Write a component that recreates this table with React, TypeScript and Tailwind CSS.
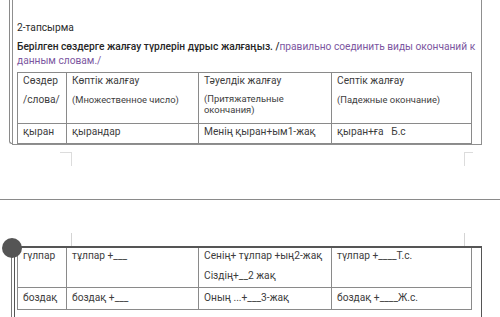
import React from "react";

const font = { fontFamily: "Roboto, 'Liberation Sans', Arial, sans-serif" };

function Cell({ children, className = "" }: { children?: React.ReactNode; className?: string }) {
  return (
    <div className={"border-r border-b border-[#8a8a8a] pl-[5px] text-[10.2px] leading-[13px] text-[#3d3d3d] " + className}>
      {children}
    </div>
  );
}

export default function App() {
  return (
    <div className="w-[500px] h-[317px] overflow-hidden bg-white" style={font}>
      {/* Top section */}
      <div className="flex">
        <div className="ml-[9px] w-[3px] h-[144px] border-l border-b border-[#8a8a8a] rounded-bl-[3px]" />
        <div className="w-[470px] h-[145px] border-l border-r border-b border-[#8f8f8f] pl-[4px] pt-[21px]">
          <div className="text-[10.2px] leading-[13px] text-[#2a2a2a]">2-тапсырма</div>
          <div className="mt-[6px] text-[10.2px] leading-[14px] whitespace-nowrap">
            <div>
              <span className="font-medium text-[#262626]">Берілген сөздерге жалғау түрлерін дұрыс жалғаңыз. /</span>
              <span className="text-[#7b56a0]">правильно соединить виды окончаний к</span>
            </div>
            <div className="text-[#7b56a0]">данным словам./</div>
          </div>
          <div className="mt-[4px] w-[455px] border-l border-t border-[#8a8a8a] grid grid-cols-[49px_132px_133px_140px] grid-rows-[51px_20px]">
            <Cell className="pt-[1px]">
              <div>Сөздер</div>
              <div className="mt-[6px]">/слова/</div>
            </Cell>
            <Cell className="pt-[1px]">
              <div>Көптік жалғау</div>
              <div className="mt-[6px] text-[9.4px]">(Множественное число)</div>
            </Cell>
            <Cell className="pt-[1px]">
              <div>Тәуелдік жалғау</div>
              <div className="mt-[6px] text-[9.4px] leading-[11px]">(Притяжательные<br />окончания)</div>
            </Cell>
            <Cell className="pt-[1px]">
              <div>Септік жалғау</div>
              <div className="mt-[6px] text-[9.4px]">(Падежные окончание)</div>
            </Cell>
            <Cell className="pt-[1px]">қыран</Cell>
            <Cell className="pt-[1px]">қырандар</Cell>
            <Cell className="pt-[1px]">Менің қыран+ым1-жақ</Cell>
            <Cell className="pt-[1px] whitespace-pre">қыран+ға   Б.с</Cell>
          </div>
        </div>
      </div>

      {/* Middle gap with page marks */}
      <div className="h-[101px] flex flex-col">
        <div className="h-[7px]" />
        <div className="h-[14px] flex">
          <div className="ml-[60px] w-[12px] border-t border-r border-[#dcdcdc]" />
          <div className="ml-[392px] w-[9px] border-t border-l border-[#dcdcdc]" />
        </div>
        <div className="h-[33px]" />
        <div className="h-px bg-[#8a8a8a]" />
        <div className="h-[33px]" />
        <div className="h-[13px] flex">
          <div className="ml-[71px] w-px bg-[#d4d4d4]" />
          <div className="ml-[392px] w-px bg-[#d4d4d4]" />
        </div>
      </div>

      {/* Bottom section */}
      <div className="relative ml-[11px] w-[471px] h-[71px] border-t-2 border-l border-r border-[#555] border-l-[#777] pl-[2px]">
        <div className="absolute left-[-10px] top-[-10px] w-[20px] h-[20px] rounded-full bg-[#555]" />
        <div className="h-full border-l border-[#555] pl-[2px]">
          <div className="w-[455px] border-l border-[#8a8a8a] grid grid-cols-[49px_132px_133px_140px] grid-rows-[40px_22px]">
            <Cell className="pt-[1px]">гүлпар</Cell>
            <Cell className="pt-[1px]">тұлпар +___</Cell>
            <Cell className="pt-[1px]">
              <div>Сенің+ тұлпар +ың2-жақ</div>
              <div className="mt-[7px]">Сіздің+__2 жақ</div>
            </Cell>
            <Cell className="pt-[1px]">түлпар +____Т.с.</Cell>
            <Cell className="pt-[3px]">боздақ</Cell>
            <Cell className="pt-[3px]">боздақ +___</Cell>
            <Cell className="pt-[3px]">Оның ...+___3-жақ</Cell>
            <Cell className="pt-[3px]">боздақ +____Ж.с.</Cell>
          </div>
        </div>
      </div>
    </div>
  );
}
